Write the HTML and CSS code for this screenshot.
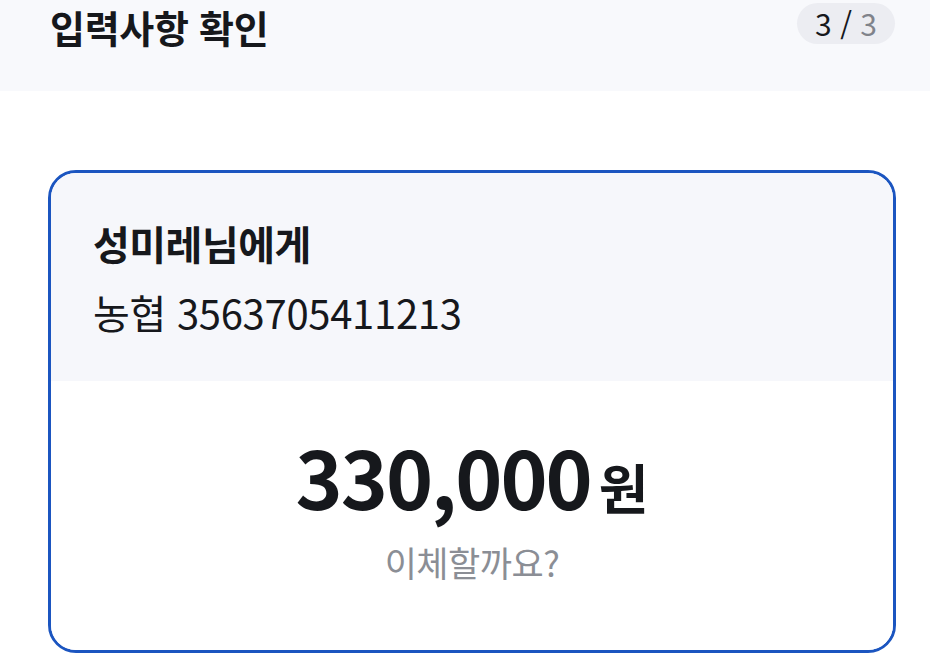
FILE: index.html
```html
<!DOCTYPE html>
<html lang="ko">
<head>
  <meta charset="UTF-8">
  <title>입력사항 확인</title>
  <link rel="stylesheet" href="styles.css">
</head>
<body>

<div class="page">
  <div class="header">
    <h1 class="title">입력사항 확인</h1>
    <span class="step"><b>3</b> / <em>3</em></span>
  </div>

  <div class="card">
    <div class="card-top">
      <p class="name">성미레님에게</p>
      <p class="account">농협 3563705411213</p>
    </div>
    <div class="card-bottom">
      <p class="amount">330,000<span class="won">원</span></p>
      <p class="ask">이체할까요?</p>
    </div>
  </div>
</div>

</body>
</html>
```

FILE: styles.css
```css
* {
  margin: 0;
  padding: 0;
  box-sizing: border-box;
}

body {
  background-color: #fff;
  font-family: "Noto Sans CJK KR", "Noto Sans", sans-serif;
  color: #16181c;
}

.page {
  width: 930px;
  height: 671px;
  overflow: hidden;
}

.header {
  height: 91px;
  background-color: #f8f9fc;
  display: flex;
  justify-content: space-between;
  align-items: flex-start;
  padding: 0 35px 0 50px;
}

.title {
  font-size: 38px;
  font-weight: 700;
  line-height: 54px;
  letter-spacing: -0.3px;
}

.step {
  margin-top: 3px;
  height: 41px;
  padding: 0 18px;
  border-radius: 21px;
  background-color: #ecedf2;
  font-size: 30px;
  line-height: 41px;
  color: #16181c;
}

.step b {
  font-weight: 400;
}

.step em {
  font-style: normal;
  color: #80838b;
}

.card {
  margin: 79px 34px 0 48px;
  height: 483px;
  border: 3px solid #1b55c0;
  border-radius: 28px;
  overflow: hidden;
  display: flex;
  flex-direction: column;
}

.card-top {
  height: 208px;
  background-color: #f6f7fb;
  padding: 40px 0 0 42px;
}

.name {
  font-size: 40px;
  font-weight: 700;
  line-height: 60px;
  letter-spacing: -0.5px;
}

.account {
  margin-top: 9px;
  font-size: 40px;
  font-weight: 400;
  line-height: 60px;
  letter-spacing: -0.3px;
}

.card-bottom {
  flex: 1;
  background-color: #fff;
  display: flex;
  flex-direction: column;
  align-items: center;
  padding-top: 44px;
}

.amount {
  font-size: 80px;
  font-weight: 700;
  line-height: 100px;
  letter-spacing: -2px;
}

.won {
  font-size: 54px;
  margin-left: 8px;
  letter-spacing: 0;
}

.ask {
  margin-top: 3px;
  font-size: 35px;
  line-height: 44px;
  color: #8b8e95;
  letter-spacing: -0.5px;
}
```
